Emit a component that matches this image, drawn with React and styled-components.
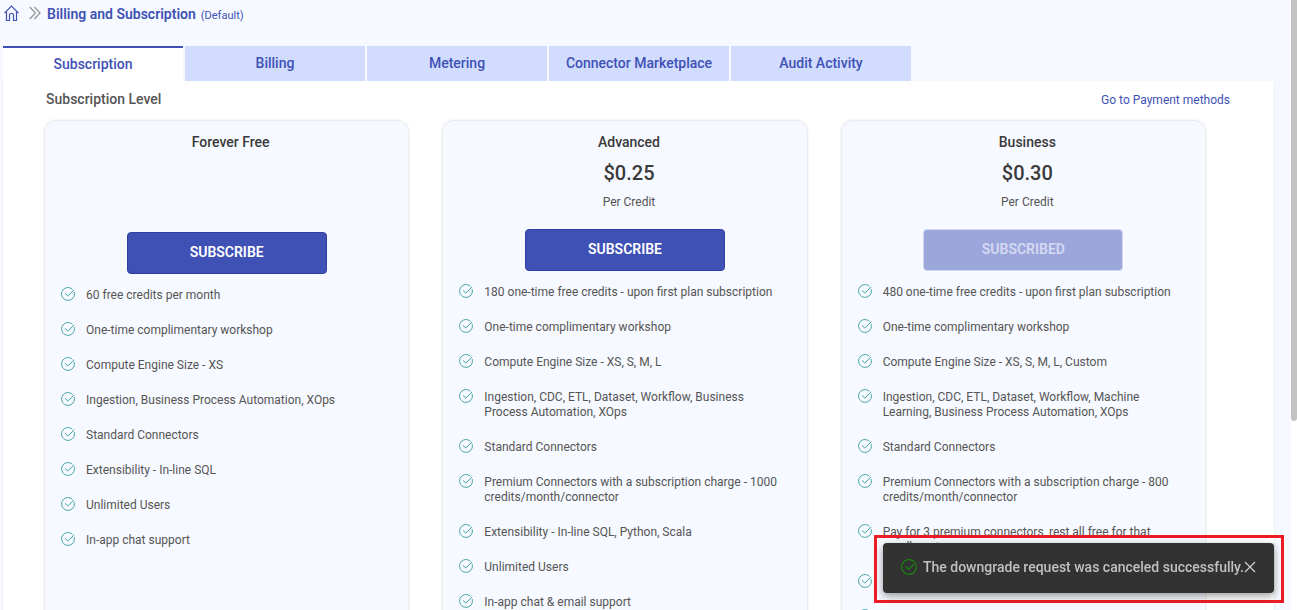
import React from "react";
import styled, { createGlobalStyle } from "styled-components";

const GlobalStyle = createGlobalStyle`
  *, *::before, *::after { box-sizing: border-box; }
  body {
    margin: 0;
    background: #f6f9ff;
    color: #555;
    font-family: Roboto, "Liberation Sans", sans-serif;
    font-size: 12px;
    line-height: 15px;
  }
`;

const Shell = styled.div`
  display: flex;
  height: 100vh;
  overflow: hidden;
  background: #f6f9ff;
`;

const Page = styled.main`
  flex: 1;
  min-width: 0;
  padding: 0 16px 0 2px;
`;

const ScrollTrack = styled.div`
  flex: none;
  width: 6px;
  background: #fff;
`;

const ScrollThumb = styled.div`
  height: 69%;
  border-radius: 0 0 3px 3px;
  background: #c3c3c3;
`;

const Breadcrumb = styled.nav`
  display: flex;
  align-items: center;
  height: 28px;
  color: #3f51b5;
`;

const HomeLink = styled.a`
  display: flex;
  margin-left: 2px;
  padding-bottom: 2px;
  color: #3f51b5;
`;

const Chevron = styled.svg`
  margin: 0 6px 2px 9px;
  color: #999;
`;

const PageTitle = styled.h1`
  margin: 0;
  font-size: 14px;
  font-weight: 600;
`;

const PageNote = styled.span`
  margin-left: 5px;
  padding-top: 2px;
  font-size: 11px;
`;

const Tabs = styled.div`
  display: flex;
  gap: 2px;
  padding: 18px 0 0 1px;
`;

const Tab = styled.button`
  width: 180px;
  height: 35px;
  padding: 0 0 ${(p) => (p.$active ? "2px" : "4px")};
  border: 0;
  border-top: 2px solid ${(p) => (p.$active ? "#3f51b5" : "#d1dcff")};
  background: ${(p) => (p.$active ? "#fff" : "#d1dcff")};
  color: #3f51b5;
  font: 500 14px/20px Roboto, sans-serif;
  cursor: pointer;
`;

const Panel = styled.section`
  min-height: 100%;
  padding: 0 68px 0 41px;
  border: 1px solid #eceef4;
  border-top-color: #fff;
  border-radius: 0 4px 0 0;
  background: #fff;
`;

const PanelHeader = styled.header`
  display: flex;
  align-items: center;
  justify-content: space-between;
  height: 38px;
  margin-right: -24px;
  padding-left: 2px;
`;

const PanelTitle = styled.h2`
  margin: 0;
  padding-bottom: 3px;
  color: #555;
  font-size: 14px;
  font-weight: 500;
`;

const PaymentLink = styled.a`
  padding-bottom: 1px;
  color: #3f51b5;
  text-decoration: none;
`;

const Plans = styled.div`
  display: grid;
  grid-template-columns: repeat(3, minmax(0, 1fr));
  gap: 33px;
`;

const Card = styled.article`
  display: flex;
  flex-direction: column;
  align-items: center;
  min-height: 600px;
  padding: 11px 20px 0 16px;
  border: 1px solid #ececf0;
  border-radius: 12px;
  background: #f6f9ff;
  box-shadow: 0 0 3px rgba(0, 0, 0, 0.08);
`;

const PlanSummary = styled.div`
  display: flex;
  flex-direction: column;
  align-items: center;
  height: ${(p) => (p.$priced ? "97px" : "100px")};
  padding-left: 12px;
  color: #3a3a3a;
`;

const PlanName = styled.h3`
  margin: 0;
  font-size: 14px;
  font-weight: 500;
  line-height: 20px;
`;

const Price = styled.div`
  margin-top: 9px;
  font-size: 20px;
  font-weight: 500;
  line-height: 24px;
`;

const PriceUnit = styled.div`
  margin-top: 10px;
  color: #555;
`;

const SubscribeButton = styled.button`
  width: 200px;
  height: 42px;
  margin-left: 4px;
  padding: 0 0 2px;
  border: 1px solid #303f9f;
  border-radius: 4px;
  background: #3f51b5;
  color: #fff;
  font: 600 14px/20px Roboto, sans-serif;
  text-transform: uppercase;
  cursor: pointer;

  &:disabled {
    border-color: #d1d8f3;
    background: #9ba6da;
    color: #d5daf2;
    cursor: default;
  }
`;

const Features = styled.ul`
  display: flex;
  flex-direction: column;
  gap: 19px;
  align-self: stretch;
  margin: 0;
  padding: 13px 0 20px;
  list-style: none;
`;

const Feature = styled.li`
  display: grid;
  grid-template-columns: 14px 1fr;
  column-gap: 11px;
  align-items: start;
`;

const FeatureText = styled.span`
  padding-top: 1px;
`;

const Toast = styled.div`
  position: fixed;
  right: 13px;
  bottom: 7px;
  width: 410px;
  padding: 5px 7px 7px 6px;
  border: 3px solid #ed1c24;
`;

const ToastBody = styled.div`
  display: flex;
  align-items: center;
  height: 50px;
  padding: 0 18px 2px;
  border-radius: 4px;
  background: #323232;
  color: #c1c1c1;
  font-size: 14px;
  font-weight: 500;
  box-shadow: 0 3px 8px rgba(0, 0, 0, 0.4);
  white-space: nowrap;
`;

const ToastText = styled.span`
  margin-left: 6px;
`;

const CloseButton = styled.button`
  display: flex;
  padding: 0;
  border: 0;
  background: none;
  color: #d0d0d0;
  cursor: pointer;
`;

function CheckIcon({ size = 14, color = "#45a3a3" }) {
  return (
    <svg width={size} height={size} viewBox="0 0 14 14" fill="none" stroke={color} aria-hidden="true">
      <path d="M13.1 5A6.4 6.4 0 1 1 11.5 2.4" />
      <path d="M4 6.4 6.8 9 13.2 2.9" />
    </svg>
  );
}

const TABS = ["Subscription", "Billing", "Metering", "Connector Marketplace", "Audit Activity"];

const PLANS = [
  {
    name: "Forever Free",
    features: [
      "60 free credits per month",
      "One-time complimentary workshop",
      "Compute Engine Size - XS",
      "Ingestion, Business Process Automation, XOps",
      "Standard Connectors",
      "Extensibility - In-line SQL",
      "Unlimited Users",
      "In-app chat support",
    ],
  },
  {
    name: "Advanced",
    price: "$0.25",
    features: [
      "180 one-time free credits - upon first plan subscription",
      "One-time complimentary workshop",
      "Compute Engine Size - XS, S, M, L",
      "Ingestion, CDC, ETL, Dataset, Workflow, Business Process Automation, XOps",
      "Standard Connectors",
      "Premium Connectors with a subscription charge - 1000 credits/month/connector",
      "Extensibility - In-line SQL, Python, Scala",
      "Unlimited Users",
      "In-app chat & email support",
    ],
  },
  {
    name: "Business",
    price: "$0.30",
    subscribed: true,
    features: [
      "480 one-time free credits - upon first plan subscription",
      "One-time complimentary workshop",
      "Compute Engine Size - XS, S, M, L, Custom",
      "Ingestion, CDC, ETL, Dataset, Workflow, Machine Learning, Business Process Automation, XOps",
      "Standard Connectors",
      "Premium Connectors with a subscription charge - 800 credits/month/connector",
      "Pay for 3 premium connectors, rest all free for that enrollment",
      "Unlimited Users",
      "In-app chat support",
    ],
  },
];

function PlanCard({ plan }) {
  return (
    <Card>
      <PlanSummary $priced={Boolean(plan.price)}>
        <PlanName>{plan.name}</PlanName>
        {plan.price && <Price>{plan.price}</Price>}
        {plan.price && <PriceUnit>Per Credit</PriceUnit>}
      </PlanSummary>
      <SubscribeButton disabled={plan.subscribed}>
        {plan.subscribed ? "Subscribed" : "Subscribe"}
      </SubscribeButton>
      <Features>
        {plan.features.map((text) => (
          <Feature key={text}>
            <CheckIcon />
            <FeatureText>{text}</FeatureText>
          </Feature>
        ))}
      </Features>
    </Card>
  );
}

export default function App() {
  return (
    <>
      <GlobalStyle />
      <Shell>
        <Page>
          <Breadcrumb aria-label="Breadcrumb">
            <HomeLink href="#home" aria-label="Home">
              <svg width="16" height="16" viewBox="0 0 16 16" fill="none" stroke="currentColor" strokeWidth="1.2">
                <path d="M.5 8.2 7.5 1l7 7.2" />
                <path d="M2.5 6.8v8.7h3V10q0-1.5 1.5-1.5h1q1.5 0 1.5 1.5v5.5h3V6.8" />
              </svg>
            </HomeLink>
            <Chevron width="12" height="14" viewBox="0 0 12 14" fill="none" stroke="currentColor" strokeWidth="1.3" aria-hidden="true">
              <path d="M.8 1 6.4 7 .8 13M5.4 1 11 7l-5.6 6" />
            </Chevron>
            <PageTitle>Billing and Subscription</PageTitle>
            <PageNote>(Default)</PageNote>
          </Breadcrumb>
          <Tabs role="tablist">
            {TABS.map((label, i) => (
              <Tab key={label} role="tab" aria-selected={i === 0} $active={i === 0}>
                {label}
              </Tab>
            ))}
          </Tabs>
          <Panel>
            <PanelHeader>
              <PanelTitle>Subscription Level</PanelTitle>
              <PaymentLink href="#payment">Go to Payment methods</PaymentLink>
            </PanelHeader>
            <Plans>
              {PLANS.map((plan) => (
                <PlanCard key={plan.name} plan={plan} />
              ))}
            </Plans>
          </Panel>
        </Page>
        <ScrollTrack>
          <ScrollThumb />
        </ScrollTrack>
      </Shell>
      <Toast role="status">
        <ToastBody>
          <CheckIcon size={16} color="#168c0b" />
          <ToastText>The downgrade request was canceled successfully.</ToastText>
          <CloseButton aria-label="Dismiss">
            <svg width="12" height="12" viewBox="0 0 12 12" stroke="currentColor" strokeWidth="1.2">
              <path d="M1 1l10 10M11 1 1 11" />
            </svg>
          </CloseButton>
        </ToastBody>
      </Toast>
    </>
  );
}
